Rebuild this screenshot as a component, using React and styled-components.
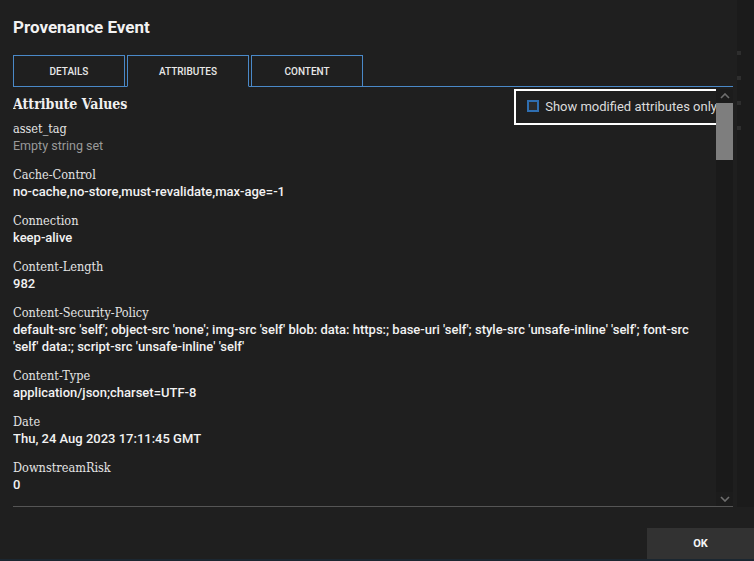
import React from 'react'
import styled, { createGlobalStyle } from 'styled-components'

const GlobalStyle = createGlobalStyle`
  html, body {
    margin: 0;
    padding: 0;
    background: #1f1f1f;
    font-family: Roboto, "Liberation Sans", sans-serif;
  }
  * { box-sizing: border-box; }
`

const attributes = [
  { name: 'asset_tag', value: 'Empty string set', empty: true },
  { name: 'Cache-Control', value: 'no-cache,no-store,must-revalidate,max-age=-1' },
  { name: 'Connection', value: 'keep-alive' },
  { name: 'Content-Length', value: '982' },
  {
    name: 'Content-Security-Policy',
    value: "default-src 'self'; object-src 'none'; img-src 'self' blob: data: https:; base-uri 'self'; style-src 'unsafe-inline' 'self'; font-src 'self' data:; script-src 'unsafe-inline' 'self'",
  },
  { name: 'Content-Type', value: 'application/json;charset=UTF-8' },
  { name: 'Date', value: 'Thu, 24 Aug 2023 17:11:45 GMT' },
  { name: 'DownstreamRisk', value: '0' },
  { name: 'Expires', value: '0' },
  { name: 'filename', value: '3f1c6a2e-7b4d-4e8a-9f0b-2d5c8e1a6b7f' },
  { name: 'invokehttp.request.duration', value: '212' },
  { name: 'invokehttp.status.code', value: '200' },
  { name: 'mime.type', value: 'application/json' },
  { name: 'path', value: './' },
]

const Page = styled.div`
  width: 754px;
  height: 561px;
  display: flex;
  flex-direction: column;
  background: #1f1f1f;
  color: #e6e6e6;
  overflow: hidden;
  border-bottom: 2px solid #1b2731;
`

const Body = styled.div`
  flex: 1;
  display: flex;
  min-height: 0;
`

const Dialog = styled.div`
  width: 737px;
  display: flex;
  flex-direction: column;
  padding: 0 4px 0 13px;
`

const OuterStrip = styled.div`
  width: 17px;
  background: #1b1b1b;
  display: flex;
  flex-direction: column;
  gap: 21px;
  padding: 51px 0 0 0;
`

const StripMark = styled.div`
  width: 4px;
  height: 4px;
  background: #2e2e2e;
`

const Title = styled.h2`
  margin: 0;
  height: 56px;
  padding-top: 17px;
  font-size: 17px;
  font-weight: 700;
  color: #f2f2f2;
  line-height: 20px;
`

const TabBar = styled.div`
  display: flex;
  gap: 2px;
  height: 32px;
  border-bottom: 1px solid #4a89c8;
`

const Tab = styled.button`
  min-width: 112px;
  padding: 0 31px;
  height: 32px;
  margin-bottom: -1px;
  background: #1f1f1f;
  border: 1px solid #4a89c8;
  border-bottom-color: ${p => (p.$active ? '#1f1f1f' : '#4a89c8')};
  color: #e8e8e8;
  font-family: Roboto, "Liberation Sans", sans-serif;
  font-size: 10px;
  font-weight: 500;
  text-transform: uppercase;
  cursor: pointer;
`

const ScrollArea = styled.div`
  height: 418px;
  margin-top: 2px;
  display: flex;
  border-bottom: 1px solid #555;
`

const Content = styled.div`
  flex: 1;
  min-width: 0;
  overflow: hidden;
`

const HeaderRow = styled.div`
  display: flex;
  justify-content: space-between;
  align-items: flex-start;
  height: 31px;
`

const Heading = styled.h3`
  margin: 6px 0 0 0;
  font-family: "DejaVu Serif", "Liberation Serif", serif;
  font-stretch: condensed;
  font-size: 14px;
  font-weight: 700;
  color: #f0f0f0;
  line-height: 18px;
`

const CheckLabel = styled.label`
  display: flex;
  align-items: center;
  gap: 6px;
  height: 36px;
  padding: 0 1px 2px 13px;
  outline: 2px solid #ffffff;
  outline-offset: -2px;
  font-size: 13px;
  color: #dcdcdc;
  white-space: nowrap;
  position: relative;
  z-index: 1;
  margin-right: -2px;
`

const Box = styled.span`
  width: 12px;
  height: 12px;
  border: 2px solid #2f6eb0;
  background: #2a2a2a;
  flex: none;
`

const Attr = styled.div`
  margin-bottom: 12px;
`

const AttrName = styled.div`
  font-family: "DejaVu Serif", "Liberation Serif", serif;
  font-stretch: condensed;
  font-size: 12.6px;
  line-height: 17px;
  color: #e4e4e4;
`

const AttrValue = styled.div`
  font-size: ${p => (p.$empty ? '12.5px' : '13px')};
  line-height: 17px;
  font-weight: ${p => (p.$empty ? 400 : 500)};
  color: ${p => (p.$empty ? '#9a9a9a' : '#f2f2f2')};
  padding-right: 8px;
`

const Scrollbar = styled.div`
  width: 17px;
  display: flex;
  flex-direction: column;
  background: #1a1a1a;
`

const ScrollButton = styled.div`
  height: 14px;
  display: flex;
  align-items: center;
  justify-content: center;
  background: #1c1c1c;
  color: #6f6f6f;
`

const Track = styled.div`
  flex: 1;
`

const Thumb = styled.div`
  height: 57px;
  background: #7e7e7e;
`

const Footer = styled.div`
  height: 52px;
  display: flex;
  justify-content: flex-end;
  align-items: flex-end;
`

const OkButton = styled.button`
  width: 107px;
  height: 31px;
  border: none;
  background: #323232;
  color: #f5f5f5;
  font-family: Roboto, "Liberation Sans", sans-serif;
  font-size: 11px;
  font-weight: 700;
  cursor: pointer;
`

const Chevron = ({ up }) => (
  <svg width="10" height="6" viewBox="0 0 10 6">
    <path
      d={up ? 'M1 5 L5 1 L9 5' : 'M1 1 L5 5 L9 1'}
      fill="none"
      stroke="currentColor"
      strokeWidth="1.6"
    />
  </svg>
)

export default function App() {
  return (
    <>
      <GlobalStyle />
      <Page>
        <Body>
          <Dialog>
            <Title>Provenance Event</Title>
            <TabBar>
              <Tab>Details</Tab>
              <Tab $active>Attributes</Tab>
              <Tab>Content</Tab>
            </TabBar>
            <ScrollArea>
              <Content>
                <HeaderRow>
                  <Heading>Attribute Values</Heading>
                  <CheckLabel>
                    <Box />
                    Show modified attributes only
                  </CheckLabel>
                </HeaderRow>
                {attributes.map(a => (
                  <Attr key={a.name}>
                    <AttrName>{a.name}</AttrName>
                    <AttrValue $empty={a.empty}>{a.value}</AttrValue>
                  </Attr>
                ))}
              </Content>
              <Scrollbar>
                <ScrollButton><Chevron up /></ScrollButton>
                <Track>
                  <Thumb />
                </Track>
                <ScrollButton><Chevron /></ScrollButton>
              </Scrollbar>
            </ScrollArea>
          </Dialog>
          <OuterStrip>
            <StripMark />
            <StripMark />
            <StripMark />
            <StripMark />
          </OuterStrip>
        </Body>
        <Footer>
          <OkButton>OK</OkButton>
        </Footer>
      </Page>
    </>
  )
}
